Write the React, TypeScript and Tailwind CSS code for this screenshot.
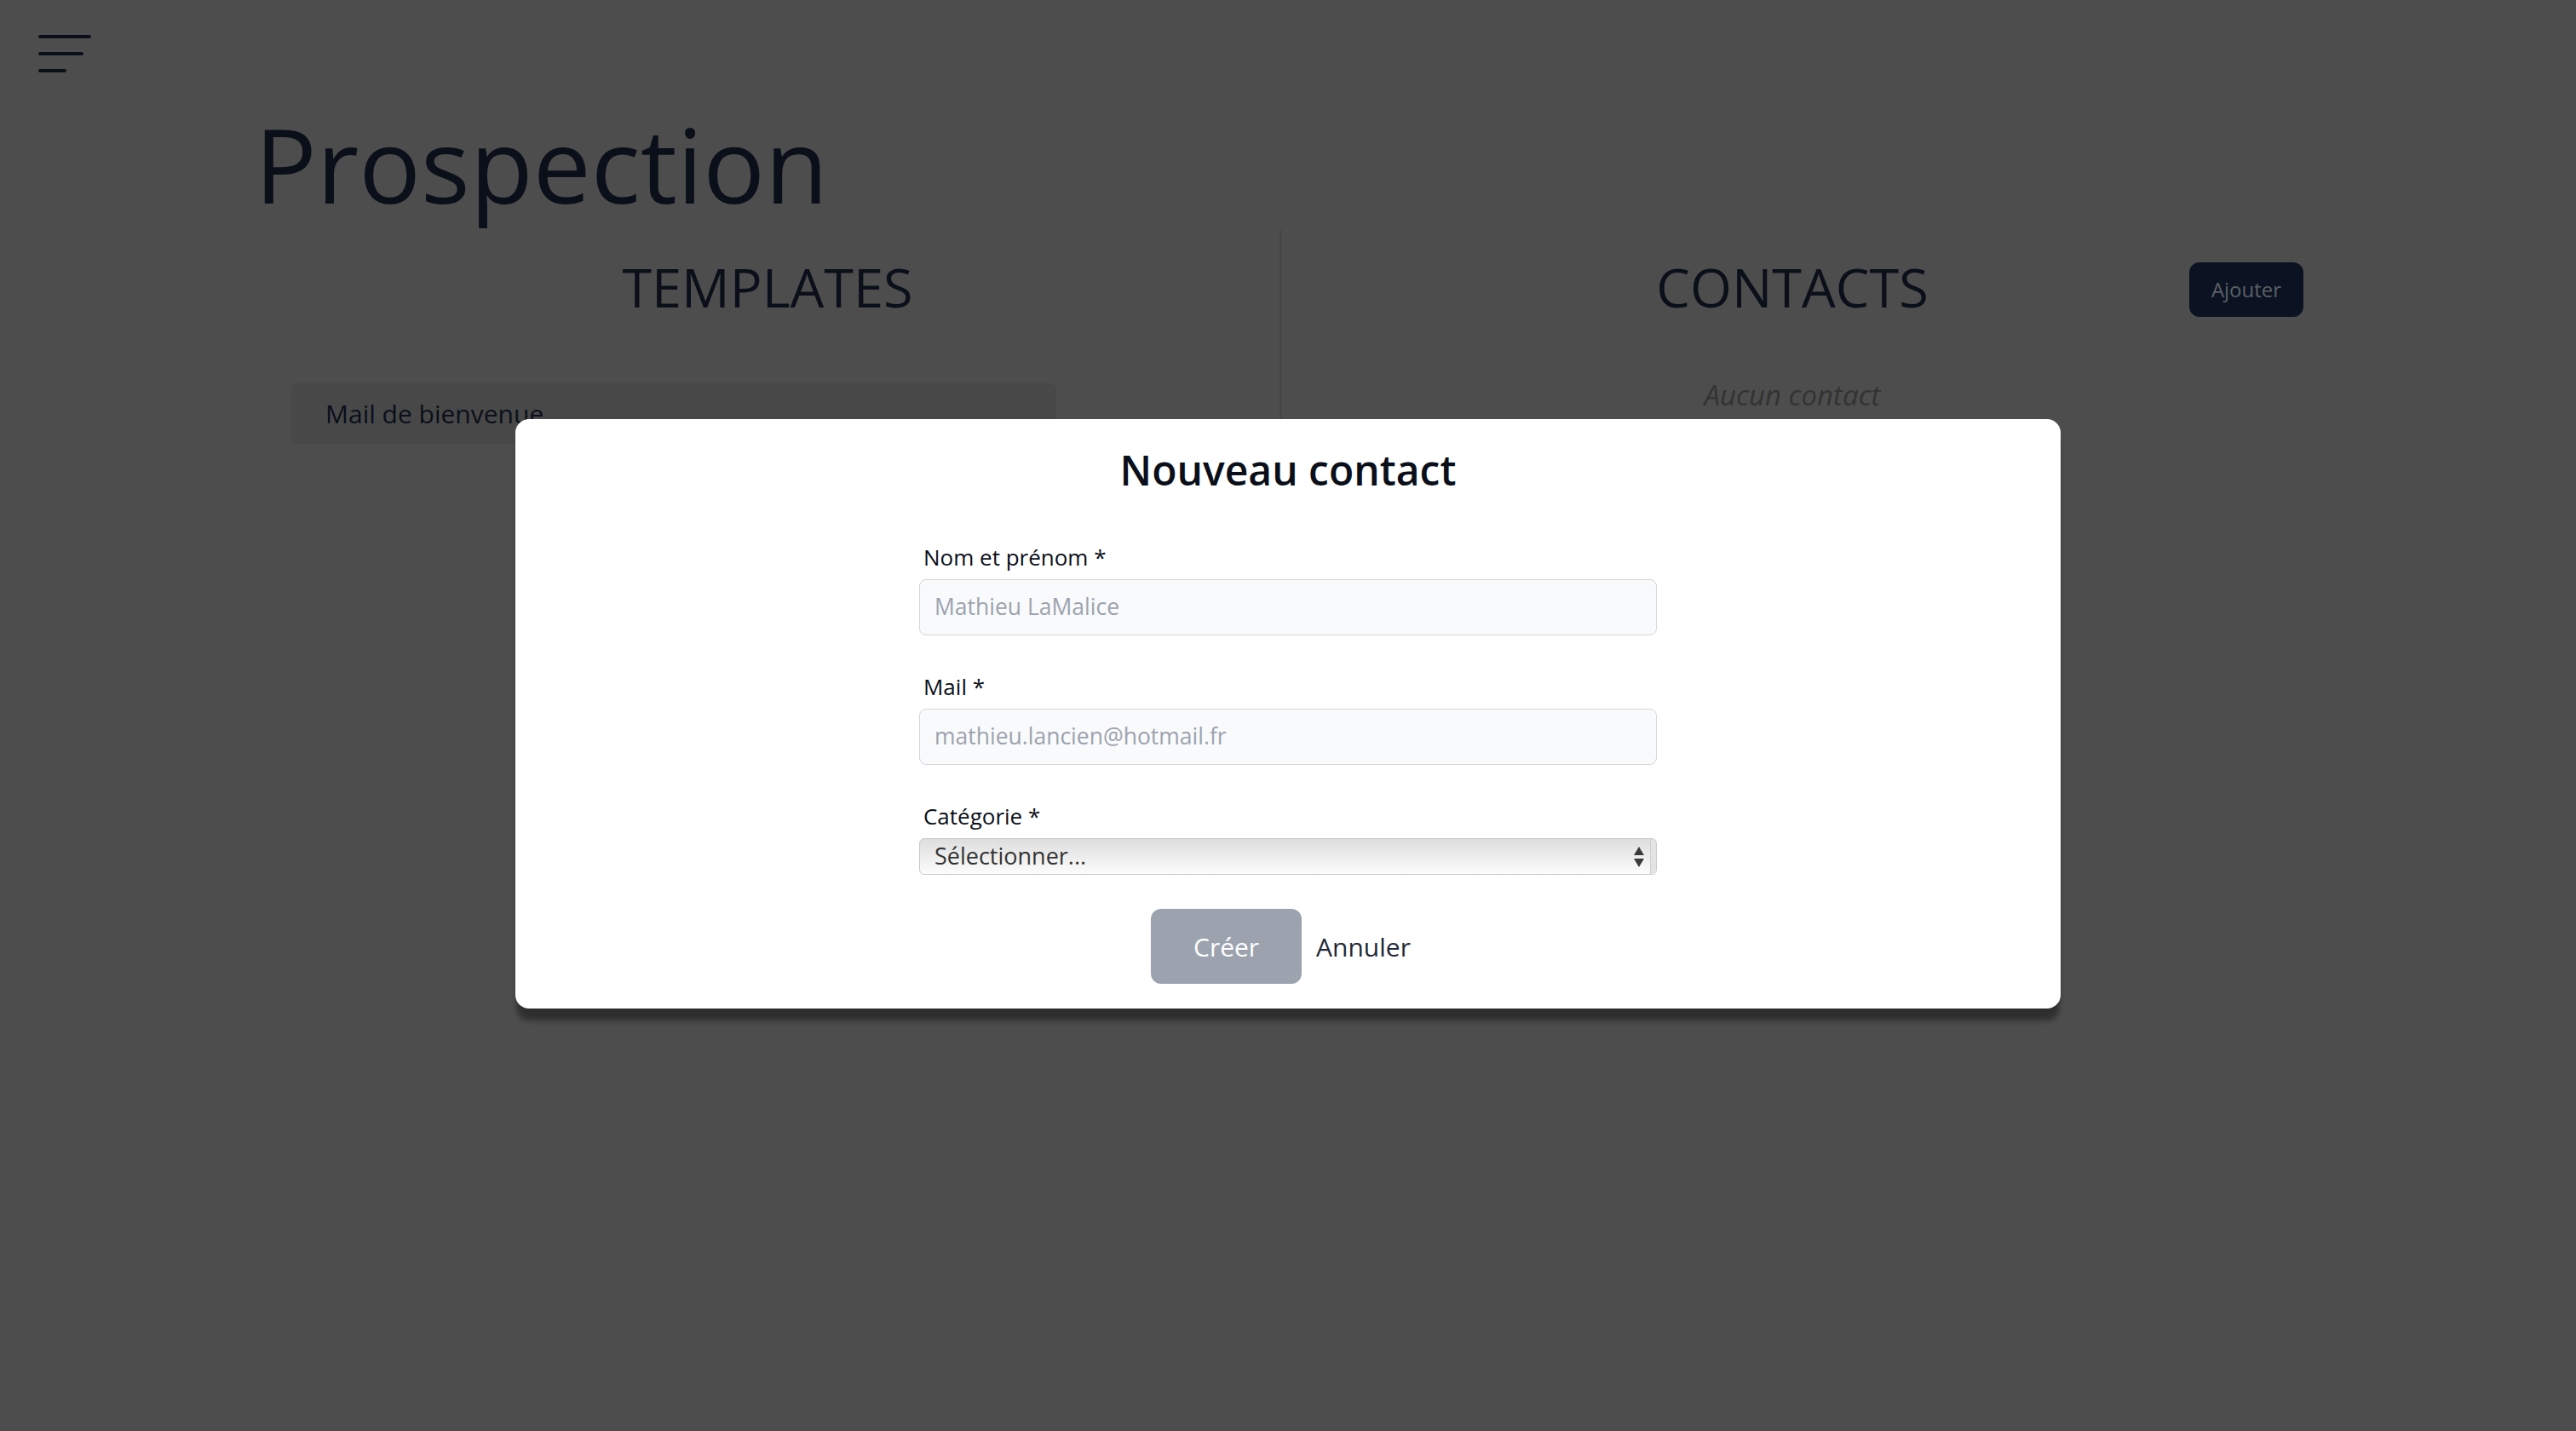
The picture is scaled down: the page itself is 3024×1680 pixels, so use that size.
import React from "react";

function Field({ label, placeholder }: { label: string; placeholder: string }) {
  return (
    <div className="flex flex-col">
      <label className="pl-[5px] text-[26px] leading-[32px] font-medium text-[#0b0f19]">{label}</label>
      <div className="mt-[10px] flex h-[66px] items-center rounded-lg border border-[#d4d6da] bg-[#f9fafb] px-[17px] text-[26.5px] text-[#9ca3af]">
        {placeholder}
      </div>
    </div>
  );
}

export default function App() {
  return (
    <div className="relative h-[1680px] w-full overflow-hidden bg-[#4d4d4d] font-['Open_Sans',sans-serif] text-[#0a0f1a]">
      {/* Menu button */}
      <div className="flex flex-col gap-[16px] pl-[45px] pt-[41px]">
        <div className="h-[4px] w-[62px] rounded-full bg-[#0a0f1a]" />
        <div className="h-[4px] w-[53px] rounded-full bg-[#0a0f1a]" />
        <div className="h-[4px] w-[33px] rounded-full bg-[#0a0f1a]" />
      </div>

      <main className="ml-[300px] w-[2404px]">
        <h1 className="-ml-[1px] mt-[47px] text-[121px] leading-[120px] font-normal">Prospection</h1>

        <div className="mt-[18px] flex h-[700px]">
          <section className="w-[1202px] pt-[31px]">
            <div className="flex h-[72px] items-center justify-center">
              <h2 className="text-[63px] leading-[72px] font-medium">TEMPLATES</h2>
            </div>
            <div className="ml-[42px] mt-[77px] flex h-[71px] w-[898px] items-center rounded-lg bg-[#484848] px-[40px] text-[30px]">
              Mail de bienvenue
            </div>
          </section>

          <div className="w-[2px] bg-[#454545]" />

          <section className="flex-1 pt-[31px]">
            <div className="relative flex h-[72px] items-center justify-center">
              <h2 className="text-[63px] leading-[72px] font-medium">CONTACTS</h2>
              <button className="absolute right-0 top-[7px] flex h-[64px] w-[134px] items-center justify-center rounded-xl bg-[#0b1222] text-[24px] text-[#5c6066]">
                Ajouter
              </button>
            </div>
            <p className="mt-[71px] text-center text-[33px] leading-[40px] italic text-[#333333]">Aucun contact</p>
          </section>
        </div>
      </main>

      {/* Modal */}
      <div className="absolute inset-0 flex items-center justify-center pb-[4px]">
        <div className="w-3/5 rounded-2xl bg-white pb-[29px] pt-[32px] shadow-[0_16px_6px_-2px_rgba(0,0,0,0.4)]">
          <h3 className="text-center text-[48px] leading-[56px] font-semibold text-[#0a0f1a]">Nouveau contact</h3>

          <div className="mx-auto mt-[58px] flex w-[866px] flex-col gap-[44px]">
            <Field label="Nom et prénom *" placeholder="Mathieu LaMalice" />
            <Field label="Mail *" placeholder="mathieu.lancien@hotmail.fr" />
            <div className="flex flex-col">
              <label className="pl-[5px] text-[26px] leading-[32px] font-medium text-[#0b0f19]">Catégorie *</label>
              <div className="relative mt-[10px] flex h-[43px] items-center rounded-md border border-[#c9c9c9] bg-linear-to-b from-[#dedede] to-[#fcfcfc] pl-[17px] text-[27px] text-[#333333]">
                Sélectionner...
                <div className="absolute right-0 top-0 h-full w-[7px] rounded-r-md border-l border-[#d0d0d0] bg-[#e4e4e4]" />
                <svg className="absolute right-[13px] top-[9px]" width="14" height="25" viewBox="0 0 14 25">
                  <polygon points="7,0 13,10 1,10" fill="#3a3a3a" />
                  <polygon points="1,14 13,14 7,24" fill="#3a3a3a" />
                </svg>
              </div>
            </div>
          </div>

          <div className="mt-[40px] flex items-center justify-center">
            <button className="flex h-[88px] w-[177px] items-center justify-center rounded-xl bg-[#9ca3af] text-[30px] text-white">
              Créer
            </button>
            <button className="px-[17px] text-[30px] text-[#1f2937]">Annuler</button>
          </div>
        </div>
      </div>
    </div>
  );
}
